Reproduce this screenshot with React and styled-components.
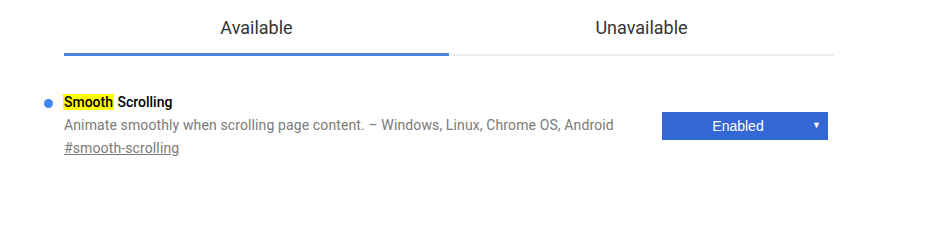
import React from "react";
import styled, { createGlobalStyle } from "styled-components";

const Global = createGlobalStyle`
  html, body { margin: 0; padding: 0; background: #fff; }
  body { font-family: Roboto, "Noto Sans", sans-serif; color: #333; }
`;

const Page = styled.div`
  width: 935px;
  height: 249px;
  overflow: hidden;
`;

const Tabs = styled.div`
  display: flex;
  width: 770px;
  margin-left: 64px;
  margin-top: 2px;
  border-bottom: 2px solid #eeeeee;
`;

const Tab = styled.div`
  flex: 1;
  text-align: center;
  font-size: 18px;
  line-height: 24px;
  padding: 14px 0 13px;
  color: #333;
  margin-bottom: -2px;
  border-bottom: 3px solid ${(p) => (p.$active ? "#4a86e0" : "transparent")};
`;

const Experiment = styled.div`
  display: flex;
  align-items: flex-start;
  margin: 38px 0 0 44px;
  width: 784px;
`;

const Dot = styled.span`
  width: 9px;
  height: 9px;
  border-radius: 50%;
  background: #4285f4;
  margin: 5px 11px 0 0;
  flex: none;
`;

const Body = styled.div`
  flex: 1;
`;

const Title = styled.div`
  font-size: 14px;
  font-weight: 500;
  line-height: 17px;
  color: #000;
`;

const Mark = styled.mark`
  background: #ffff00;
  color: #000;
  padding: 0 1px;
  margin-left: -1px;
`;

const Desc = styled.div`
  font-size: 14px;
  line-height: 23px;
  color: #7a7a7a;
  margin-top: 3px;
  letter-spacing: 0.12px;
`;

const Link = styled.a`
  color: #7a7a7a;
  text-decoration: underline;
  font-size: 14px;
`;

const Select = styled.div`
  position: relative;
  box-sizing: border-box;
  width: 166px;
  height: 28px;
  margin-top: 18px;
  padding-right: 14px;
  background: #3367d6;
  color: #fff;
  font-family: "Liberation Sans", Arial, sans-serif;
  font-size: 14px;
  display: flex;
  align-items: center;
  justify-content: center;
  flex: none;
`;

const Arrow = styled.span`
  position: absolute;
  right: 7px;
  top: 8px;
  font-size: 9px;
`;

export default function App() {
  return (
    <Page>
      <Global />
      <Tabs>
        <Tab $active>Available</Tab>
        <Tab>Unavailable</Tab>
      </Tabs>
      <Experiment>
        <Dot />
        <Body>
          <Title>
            <Mark>Smooth</Mark> Scrolling
          </Title>
          <Desc>
            Animate smoothly when scrolling page content. – Windows, Linux, Chrome OS, Android
            <br />
            <Link href="#smooth-scrolling">#smooth-scrolling</Link>
          </Desc>
        </Body>
        <Select>
          Enabled
          <Arrow>▼</Arrow>
        </Select>
      </Experiment>
    </Page>
  );
}
